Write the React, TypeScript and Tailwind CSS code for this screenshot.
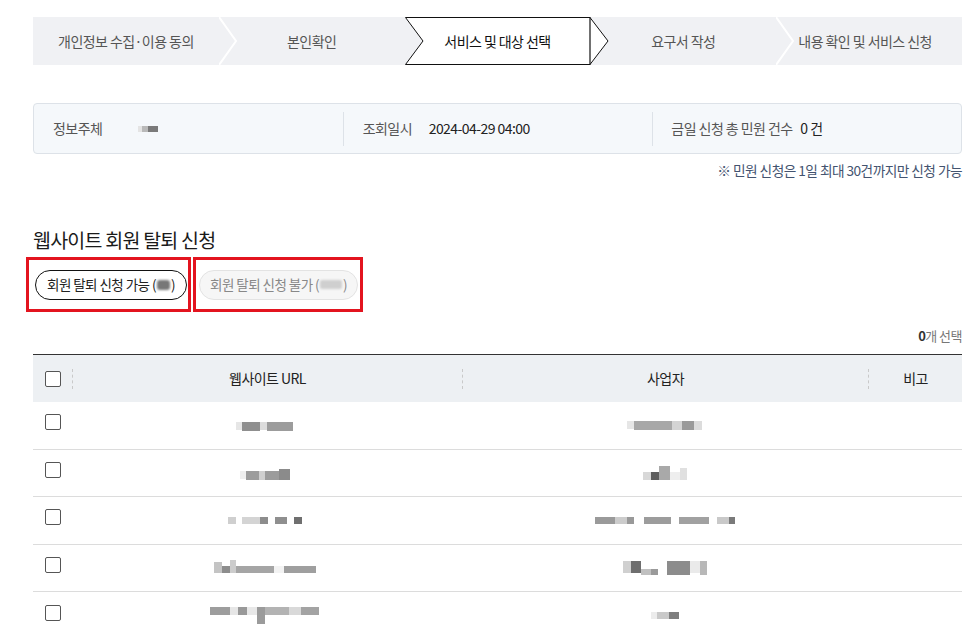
import React from "react";

type Block = { w: number; c: string; h?: number; dy?: number };

function Pix({ blocks }: { blocks: Block[] }) {
  return (
    <div className="flex items-start blur-[0.6px]">
      {blocks.map((b, i) => (
        <div
          key={i}
          style={{ width: b.w, height: b.h ?? 10, marginTop: b.dy ?? 0, background: b.c }}
        />
      ))}
    </div>
  );
}

const steps = [
  "개인정보 수집·이용 동의",
  "본인확인",
  "서비스 및 대상 선택",
  "요구서 작성",
  "내용 확인 및 서비스 신청",
];

function Stepper() {
  return (
    <div className="flex h-[48px] w-full bg-[#f0f1f4]">
      {steps.map((s, i) => (
        <div key={i} className="relative flex flex-1 items-center justify-center">
          {i === 2 && (
            <svg
              className="absolute left-0 top-0 overflow-visible"
              width="203"
              height="48"
              viewBox="0 0 203 48"
            >
              <polygon
                points="0.5,0.5 185,0.5 203,24 185,47.5 0.5,47.5 18,24"
                fill="#ffffff"
                stroke="#111111"
                strokeWidth="1"
              />
              <line x1="185" y1="0" x2="185" y2="48" stroke="#111111" strokeWidth="1.2" />
            </svg>
          )}
          {(i === 1 || i === 4) && (
            <svg className="absolute left-0 top-0" width="20" height="48" viewBox="0 0 20 48">
              <polyline points="0,0 17,24 0,48" fill="none" stroke="#ffffff" strokeWidth="2" />
            </svg>
          )}
          <span
            className={
              "relative text-[14px] tracking-[-0.04em] " +
              (i === 2 ? "text-[#111]" : "text-[#555]") +
              (i === 4 ? " tracking-[-0.01em] pr-[8px]" : "")
            }
          >
            {s}
          </span>
        </div>
      ))}
    </div>
  );
}

function InfoBox() {
  return (
    <div className="flex h-[51px] w-full items-center rounded-[4px] border border-[#dde2e8] bg-[#f5f8fb]">
      <div className="flex h-[34px] flex-1 items-center border-r border-[#dde2e8] pl-[19px]">
        <span className="w-[85px] text-[14px] tracking-[-0.04em] text-[#555]">정보주체</span>
        <Pix
          blocks={[
            { w: 4, c: "#e4e4e4", h: 6 },
            { w: 6, c: "#b9b9b9", h: 6 },
            { w: 10, c: "#7a7a7a", h: 6 },
          ]}
        />
      </div>
      <div className="flex h-[34px] flex-1 items-center border-r border-[#dde2e8] pl-[19px]">
        <span className="w-[66px] text-[14px] tracking-[-0.04em] text-[#555]">조회일시</span>
        <span className="text-[14px] tracking-[-0.04em] text-[#222]">2024-04-29 04:00</span>
      </div>
      <div className="flex h-[34px] flex-1 items-center pl-[18px]">
        <span className="w-[129px] text-[14px] tracking-[-0.04em] text-[#555]">금일 신청 총 민원 건수</span>
        <span className="text-[14px] tracking-[-0.04em] text-[#222]">0 건</span>
      </div>
    </div>
  );
}

const rows: { url: Block[]; biz: Block[] }[] = [
  {
    url: [
      { w: 6, c: "#e6e6e6", h: 8, dy: 2 },
      { w: 18, c: "#8f8f8f", h: 9, dy: 2 },
      { w: 7, c: "#dcdcdc", h: 8, dy: 2 },
      { w: 26, c: "#9c9c9c", h: 9, dy: 2 },
    ],
    biz: [
      { w: 7, c: "#e6e6e6", h: 8 },
      { w: 38, c: "#a8a8a8", h: 9 },
      { w: 10, c: "#d4d4d4", h: 9 },
      { w: 12, c: "#9a9a9a", h: 9 },
      { w: 8, c: "#dcdcdc", h: 9 },
    ],
  },
  {
    url: [
      { w: 6, c: "#eeeeee", h: 8, dy: 6 },
      { w: 13, c: "#9c9c9c", h: 9, dy: 6 },
      { w: 6, c: "#cfcfcf", h: 9, dy: 6 },
      { w: 14, c: "#9c9c9c", h: 9, dy: 6 },
      { w: 11, c: "#8b8b8b", h: 11, dy: 4 },
    ],
    biz: [
      { w: 8, c: "#d8d8d8", h: 8, dy: 6 },
      { w: 8, c: "#5e5e5e", h: 8, dy: 6 },
      { w: 11, c: "#a9a9a9", h: 14, dy: 0 },
      { w: 10, c: "#eeeeee", h: 8, dy: 6 },
      { w: 7, c: "#e0e0e0", h: 12, dy: 2 },
    ],
  },
  {
    url: [
      { w: 8, c: "#cfcfcf", h: 7 },
      { w: 6, c: "transparent", h: 7 },
      { w: 18, c: "#d4d4d4", h: 7 },
      { w: 8, c: "#8d8d8d", h: 7 },
      { w: 7, c: "transparent", h: 7 },
      { w: 12, c: "#8f8f8f", h: 7 },
      { w: 7, c: "transparent", h: 7 },
      { w: 8, c: "#6f6f6f", h: 7 },
    ],
    biz: [
      { w: 20, c: "#9a9a9a", h: 7 },
      { w: 12, c: "#cccccc", h: 7 },
      { w: 7, c: "#999999", h: 7 },
      { w: 10, c: "transparent", h: 7 },
      { w: 27, c: "#9c9c9c", h: 7 },
      { w: 8, c: "transparent", h: 7 },
      { w: 30, c: "#a1a1a1", h: 7 },
      { w: 8, c: "transparent", h: 7 },
      { w: 12, c: "#c9c9c9", h: 7 },
      { w: 6, c: "#7a7a7a", h: 7 },
    ],
  },
  {
    url: [
      { w: 8, c: "#c4c4c4", h: 11, dy: 0 },
      { w: 8, c: "#8d8d8d", h: 7, dy: 4 },
      { w: 6, c: "#cccccc", h: 13, dy: -2 },
      { w: 38, c: "#a5a5a5", h: 7, dy: 4 },
      { w: 10, c: "#f3f3f3", h: 7, dy: 4 },
      { w: 32, c: "#9f9f9f", h: 7, dy: 4 },
    ],
    biz: [
      { w: 8, c: "#d0d0d0", h: 12 },
      { w: 10, c: "#6e6e6e", h: 12 },
      { w: 10, c: "#c0c0c0", h: 6, dy: 8 },
      { w: 7, c: "#9a9a9a", h: 6, dy: 8 },
      { w: 9, c: "transparent", h: 6 },
      { w: 23, c: "#8c8c8c", h: 14 },
      { w: 10, c: "#eaeaea", h: 12 },
      { w: 7, c: "#b8b8b8", h: 14 },
    ],
  },
  {
    url: [
      { w: 20, c: "#9d9d9d", h: 8 },
      { w: 8, c: "#e6e6e6", h: 8 },
      { w: 9, c: "#999999", h: 8 },
      { w: 10, c: "#e8e8e8", h: 8 },
      { w: 8, c: "#9b9b9b", h: 17 },
      { w: 24, c: "#b3b3b3", h: 8 },
      { w: 12, c: "#d9d9d9", h: 8 },
      { w: 18, c: "#a3a3a3", h: 8 },
    ],
    biz: [
      { w: 6, c: "#ececec", h: 7 },
      { w: 12, c: "#c9c9c9", h: 7 },
      { w: 10, c: "#7f7f7f", h: 7 },
    ],
  },
];

function Checkbox() {
  return <div className="h-[16px] w-[16px] rounded-[2px] border-[1.5px] border-[#555] bg-white" />;
}

function DashSep() {
  return <div className="h-[20px] w-0 border-l border-dashed border-[#c9c9c9]" />;
}

export default function App() {
  return (
    <div className="min-h-[638px] bg-white font-['Noto_Sans_CJK_KR','Noto_Sans',sans-serif]">
      <div className="ml-[33px] w-[929px] pt-[17px]">
        <Stepper />

        <div className="mt-[38px]">
          <InfoBox />
        </div>

        <div className="mt-[6px] text-right text-[13.7px] tracking-[-0.04em] text-[#43536f]">
          ※ 민원 신청은 1일 최대 30건까지만 신청 가능
        </div>

        <h2 className="mt-[47px] text-[19.5px] font-normal leading-[24px] tracking-[-0.04em] text-[#1a1a1a]">
          웹사이트 회원 탈퇴 신청
        </h2>

        <div className="relative mt-[18px] flex gap-[12px] pl-[2px]">
          <div className="flex h-[30px] items-center rounded-full border border-[#111] bg-white px-[11px] text-[13.5px] tracking-[-0.04em] text-[#222]">
            회원 탈퇴 신청 가능 (
            <span className="mx-[1px] inline-block h-[10px] w-[13px] rounded-[3px] bg-[#777] blur-[1px]" />
            )
          </div>
          <div className="flex h-[30px] items-center rounded-full border border-[#e3e3e3] bg-[#f6f6f6] px-[10px] text-[13.5px] tracking-[-0.04em] text-[#888]">
            회원 탈퇴 신청 불가 (
            <span className="mx-[1px] inline-block h-[9px] w-[22px] rounded-[2px] bg-[#cfcfcf] blur-[1px]" />
            )
          </div>
          <div className="pointer-events-none absolute left-[-7px] top-[-13px] h-[55px] w-[165px] border-[3px] border-[#e3141f]" />
          <div className="pointer-events-none absolute left-[160px] top-[-13px] h-[55px] w-[170px] border-[3px] border-[#e3141f]" />
        </div>

        <div className="mt-[26px] text-right text-[13px] tracking-[-0.04em]">
          <span className="font-bold text-[#333]">0</span>
          <span className="text-[#777]">개 선택</span>
        </div>

        <div className="mt-[9px] border-t border-[#333]">
          <div className="flex h-[47px] items-center bg-[#edf0f3] text-[14px] tracking-[-0.04em] text-[#222]">
            <div className="flex w-[40px] items-center justify-between pl-[12px]">
              <Checkbox />
              <DashSep />
            </div>
            <div className="flex w-[389px] items-center justify-center">웹사이트 URL</div>
            <DashSep />
            <div className="flex w-[405px] items-center justify-center">사업자</div>
            <DashSep />
            <div className="flex flex-1 items-center justify-center">비고</div>
          </div>
          {rows.map((r, i) => (
            <div
              key={i}
              className={
                "flex h-[47.5px] items-center " + (i < rows.length - 1 ? "border-b border-[#dcdcdc]" : "")
              }
            >
              <div className="flex w-[40px] items-center pl-[12px] pb-[6px]">
                <Checkbox />
              </div>
              <div className="flex w-[389px] items-center justify-center pr-[6px]">
                <Pix blocks={r.url} />
              </div>
              <div className="flex w-[405px] items-center justify-center">
                <Pix blocks={r.biz} />
              </div>
              <div className="flex-1" />
            </div>
          ))}
        </div>
      </div>
    </div>
  );
}
